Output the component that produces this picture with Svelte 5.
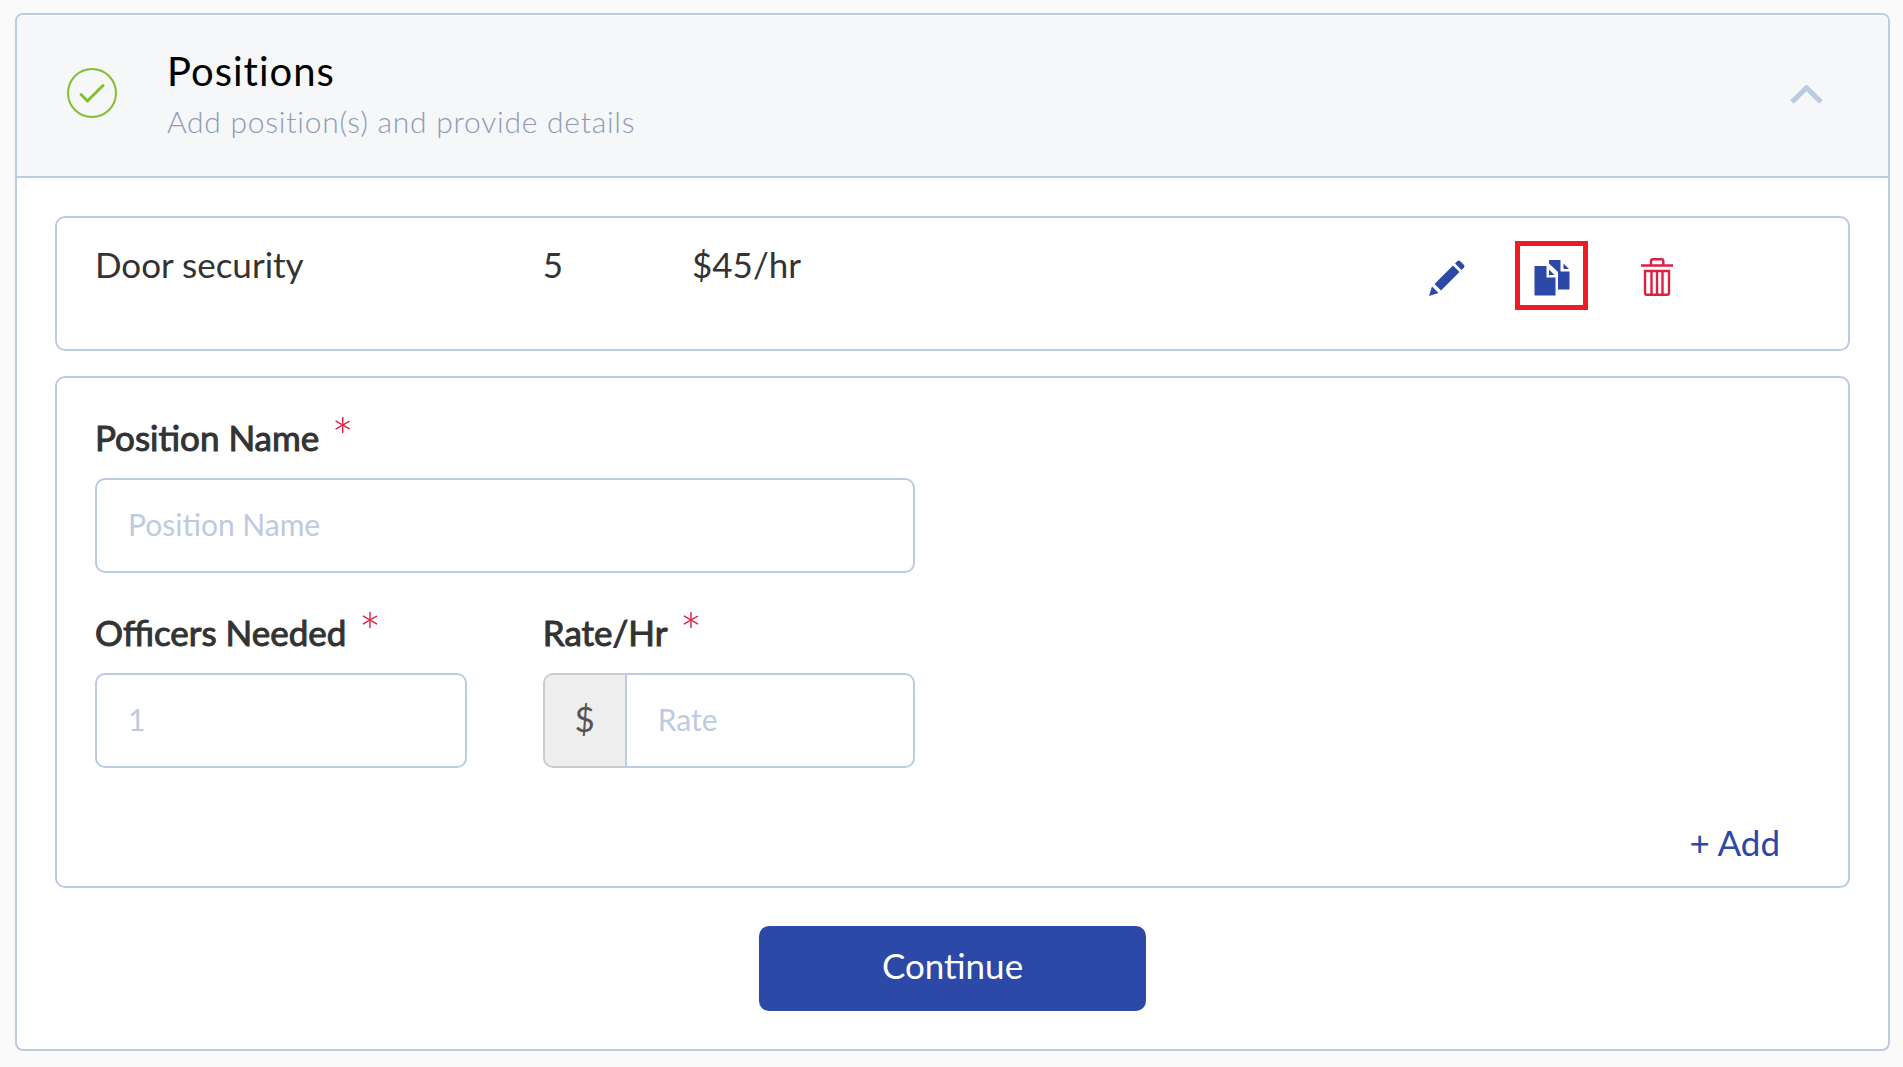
<script lang="ts">
  type Position = {
    id: number;
    name: string;
    officers: number;
    rate: number;
  };

  let nextId = 2;
  let open = $state(true);
  let highlighted = $state('copy');
  let positions = $state<Position[]>([
    { id: 1, name: 'Door security', officers: 5, rate: 45 }
  ]);

  let name = $state('');
  let officers = $state('');
  let rate = $state('');

  function addPosition() {
    if (!name || !officers || !rate) return;
    positions.push({ id: nextId++, name, officers: Number(officers), rate: Number(rate) });
    name = '';
    officers = '';
    rate = '';
  }

  function editPosition(position: Position) {
    name = position.name;
    officers = String(position.officers);
    rate = String(position.rate);
    removePosition(position.id);
  }

  function copyPosition(position: Position) {
    positions.push({ ...position, id: nextId++ });
  }

  function removePosition(id: number) {
    positions = positions.filter((p) => p.id !== id);
  }
</script>

<section class="panel">
  <header class="panel-header">
    <svg class="status" viewBox="0 0 50 50" aria-hidden="true">
      <circle cx="25" cy="25" r="24" />
      <path d="M14 26.5l6.5 6.5L36 17.5" />
    </svg>
    <div class="heading">
      <h2>Positions</h2>
      <p>Add position(s) and provide details</p>
    </div>
    <button class="toggle" aria-label="Toggle section" aria-expanded={open} onclick={() => (open = !open)}>
      <svg class:closed={!open} viewBox="0 0 33 19">
        <path d="M2 17L16.500 2.800L31 17" />
      </svg>
    </button>
  </header>

  {#if open}
    <div class="panel-body">
      {#each positions as position (position.id)}
        <div class="card position">
          <span class="col-3">{position.name}</span>
          <span class="col-1">{position.officers}</span>
          <span class="col-5">${position.rate}/hr</span>
          <div class="actions">
            <button aria-label="Edit" onclick={() => editPosition(position)}>
              <svg width="36" height="36" viewBox="0 0 36 36">
                <path d="M0 36L3 26.500L9.500 33z" />
                <path d="M5.500 24L24 5.500L30.500 12L12 30.500z" />
                <path d="M26 3.500L28.500 1Q29.800 0 31 1L35 5Q36 6.300 35 7.500L32.500 10z" />
              </svg>
            </button>
            <button
              class:highlight={highlighted === 'copy'}
              aria-label="Duplicate"
              onclick={() => copyPosition(position)}
            >
              <svg width="36" height="36" viewBox="0 0 36 36">
                <path d="M15 0H26.500V11.500H35.500V29.500H24V12L15 3.500z" />
                <path d="M29.500 3.500L35 9H29.500z" />
                <path d="M0.500 6H12.500V17.500H21.500V35.500H0.500z" />
                <path d="M15 9.500L20.500 15H15z" />
              </svg>
            </button>
            <button class="danger" aria-label="Delete" onclick={() => removePosition(position.id)}>
              <svg width="32" height="40" viewBox="0 0 32 40">
                <path d="M0 7.500H32M10 7V3Q10 1.200 12 1.200H20.500Q22.300 1.200 22.300 3V7" />
                <path d="M4 13H28V35Q28 36.800 26.200 36.800H5.800Q4 36.800 4 35z" />
                <path d="M10.500 13V37M16 13V37M21.500 13V37" />
              </svg>
            </button>
          </div>
        </div>
      {/each}

      <form class="card" onsubmit={(e) => { e.preventDefault(); addPosition(); }}>
        <div class="field col-6">
          <label for="position-name">Position Name <span class="required">*</span></label>
          <input id="position-name" type="text" placeholder="Position Name" bind:value={name} />
        </div>
        <div class="field col-3 first">
          <label for="officers">Officers Needed <span class="required">*</span></label>
          <input id="officers" type="text" placeholder="1" bind:value={officers} />
        </div>
        <div class="field col-3">
          <label for="rate">Rate/Hr <span class="required">*</span></label>
          <div class="input-group">
            <span class="addon">$</span>
            <input id="rate" type="text" placeholder="Rate" bind:value={rate} />
          </div>
        </div>
        <button class="add" type="submit">+ Add</button>
      </form>

      <button class="continue">Continue</button>
    </div>
  {/if}
</section>

<style>
  :global(body) {
    background: #fafafa;
    font-family: Lato, sans-serif;
    font-size: 35px;
    color: #333;
  }

  .panel {
    --border: #bccbe1;
    --primary: #2c49a7;
    --danger: #dc2144;

    margin: 13px 13px 16px 15px;
    border: 2px solid var(--border);
    border-radius: 8px;
    background: #fff;
  }

  button {
    padding: 0;
    border: 0;
    background: none;
    font: inherit;
    color: var(--primary);
    cursor: pointer;
  }

  .panel-header {
    display: flex;
    align-items: center;
    box-sizing: border-box;
    height: 163px;
    padding: 0 65px 4px 50px;
    border-bottom: 2px solid var(--border);
    border-top: 1px solid #fff;
    border-radius: 6px 6px 0 0;
    background: #f5f7f9;
  }

  .status {
    width: 50px;
    height: 50px;
    margin-bottom: 2px;
    fill: none;
    stroke: #86bf2c;
    stroke-width: 2;
  }

  .status path {
    stroke-width: 3;
    stroke-linecap: round;
  }

  .heading {
    flex: 1;
    padding-left: 50px;
  }

  h2,
  p {
    margin: 0;
    letter-spacing: 0.025em;
  }

  h2 {
    font-size: 40px;
    line-height: 54px;
    font-weight: 400;
    color: #000;
  }

  p {
    font-size: 30px;
    line-height: 46px;
    font-weight: 300;
    color: #8e9bb3;
  }

  .toggle svg {
    display: block;
    width: 33px;
    height: 19px;
    fill: none;
    stroke: var(--border);
    stroke-width: 5;
  }

  .toggle .closed {
    transform: rotate(180deg);
  }

  .panel-body {
    padding: 38px;
  }

  .card {
    display: grid;
    grid-template-columns: repeat(12, minmax(0, 1fr));
    margin-bottom: 25px;
    border: 2px solid var(--border);
    border-radius: 10px;
  }

  .col-1 { grid-column-end: span 1; }
  .col-3 { grid-column-end: span 3; }
  .col-5 { grid-column-end: span 5; }
  .col-6 { grid-column-end: span 6; }
  .first { grid-column-start: 1; }

  .position {
    padding: 23px 0 39px;
    line-height: 46px;
  }

  .position > span {
    padding-left: 38px;
  }

  .actions {
    grid-column-end: span 3;
    display: flex;
    gap: 32px;
    height: 69px;
    padding-left: 10px;
  }

  .actions button {
    display: flex;
    align-items: center;
    justify-content: center;
    box-sizing: border-box;
    width: 73px;
    padding-top: 5px;
    border: 5px solid transparent;
  }

  .actions .highlight {
    border-color: #ed1c24;
  }

  .actions svg {
    fill: currentColor;
  }

  .actions .danger svg {
    fill: none;
    stroke: var(--danger);
    stroke-width: 2.400;
  }

  form {
    row-gap: 36px;
    padding: 36px 0 20px;
  }

  .field {
    padding: 0 38px;
  }

  label {
    display: flex;
    gap: 12px;
    height: 48px;
    margin-bottom: 16px;
    line-height: 46px;
    -webkit-text-stroke: 1px currentColor;
  }

  .required {
    font-size: 54px;
    font-weight: 300;
    line-height: 46px;
    color: var(--danger);
    -webkit-text-stroke: 0;
  }

  input {
    box-sizing: border-box;
    width: 100%;
    height: 95px;
    padding: 0 31px 4px;
    border: 2px solid var(--border);
    border-radius: 10px;
    background: #fff;
    font-family: inherit;
    font-size: 30px;
    color: #333;
  }

  input::placeholder {
    color: #bccbe1;
    opacity: 1;
  }

  .input-group {
    display: flex;
  }

  .input-group input {
    flex: 1;
    min-width: 0;
    border-radius: 0 10px 10px 0;
  }

  .addon {
    display: flex;
    align-items: center;
    justify-content: center;
    box-sizing: border-box;
    width: 82px;
    padding-bottom: 6px;
    border: 2px solid #ccc;
    border-right: 0;
    border-radius: 10px 0 0 10px;
    background: #eee;
    color: #555;
  }

  .add {
    grid-column: 1 / -1;
    justify-self: end;
    margin: 14px 68px 0 0;
    line-height: 48px;
  }

  .continue {
    display: block;
    width: 387px;
    height: 85px;
    margin: 38px auto 0;
    padding-bottom: 8px;
    border-radius: 10px;
    background: var(--primary);
    color: #fff;
  }
</style>
